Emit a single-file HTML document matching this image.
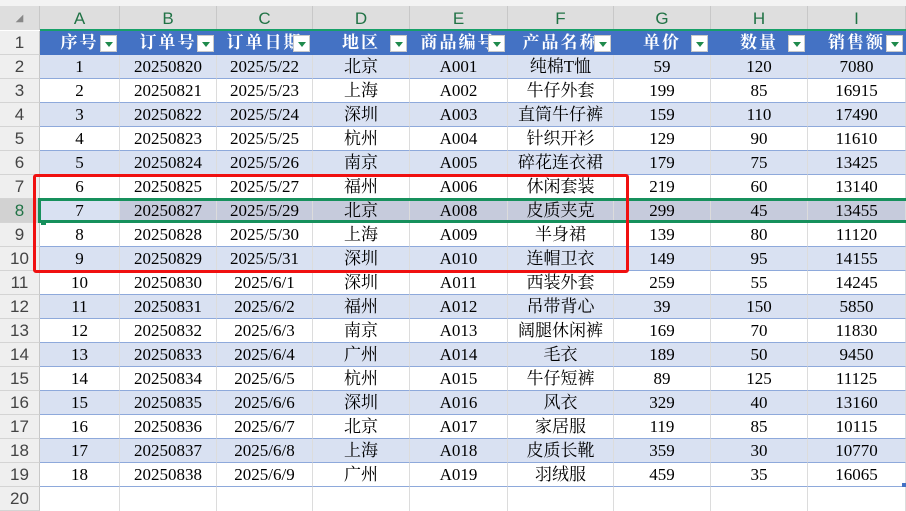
<!DOCTYPE html>
<html><head><meta charset="utf-8"><style>
body{margin:0;width:906px;height:511px;overflow:hidden;background:#fff;position:relative;font-family:"Liberation Serif","Noto Serif CJK SC",serif;}
.top{position:absolute;left:0;top:0;width:906px;height:6px;background:#f3f3f3}
.ch{position:absolute;top:6px;height:24px;background:#dedede;border-right:1px solid #c8c8c8;box-sizing:border-box;text-align:center;line-height:25px;font-family:"Liberation Sans",sans-serif;font-size:17px;color:#217346}
.gl{position:absolute;left:40px;top:29px;width:866px;height:2px;background:#17a068}
.rh{position:absolute;left:0;width:40px;height:24px;background:#efefef;border-bottom:1px solid #d4d4d4;border-right:1px solid #c8c8c8;box-sizing:border-box;text-align:center;line-height:24px;font-family:"Liberation Sans",sans-serif;font-size:17px;color:#444}
.c{position:absolute;height:24px;box-sizing:border-box;border-right:1px solid #dcdcdc;border-bottom:1px solid #8ea9db;text-align:center;line-height:24px;font-size:17px;color:#000;white-space:nowrap;overflow:hidden}
.h{background:#4472c4;color:#fff;font-weight:bold;border-right:1px solid #4472c4;border-bottom:none;letter-spacing:2px}
.fb{position:absolute;top:4px;width:17px;height:17px;background:#fff;border:1px solid #c9c9c9;box-sizing:border-box}
.fb:after{content:"";position:absolute;left:4px;top:6px;border-left:4px solid transparent;border-right:4px solid transparent;border-top:5px solid #1f8a4c}
</style></head><body>
<div class="top"></div>
<div class="ch" style="left:0;width:40px;color:#888;font-size:10px">◢</div>
<div id="g"></div>
<script>
var cols=[40,120,217,313,410,508,614,711,808,906];
var L="ABCDEFGHI";
var hdr=["序号","订单号","订单日期","地区","商品编号","产品名称","单价","数量","销售额"];
var d=[
[1,20250820,"2025/5/22","北京","A001","纯棉T恤",59,120,7080],
[2,20250821,"2025/5/23","上海","A002","牛仔外套",199,85,16915],
[3,20250822,"2025/5/24","深圳","A003","直筒牛仔裤",159,110,17490],
[4,20250823,"2025/5/25","杭州","A004","针织开衫",129,90,11610],
[5,20250824,"2025/5/26","南京","A005","碎花连衣裙",179,75,13425],
[6,20250825,"2025/5/27","福州","A006","休闲套装",219,60,13140],
[7,20250827,"2025/5/29","北京","A008","皮质夹克",299,45,13455],
[8,20250828,"2025/5/30","上海","A009","半身裙",139,80,11120],
[9,20250829,"2025/5/31","深圳","A010","连帽卫衣",149,95,14155],
[10,20250830,"2025/6/1","深圳","A011","西装外套",259,55,14245],
[11,20250831,"2025/6/2","福州","A012","吊带背心",39,150,5850],
[12,20250832,"2025/6/3","南京","A013","阔腿休闲裤",169,70,11830],
[13,20250833,"2025/6/4","广州","A014","毛衣",189,50,9450],
[14,20250834,"2025/6/5","杭州","A015","牛仔短裤",89,125,11125],
[15,20250835,"2025/6/6","深圳","A016","风衣",329,40,13160],
[16,20250836,"2025/6/7","北京","A017","家居服",119,85,10115],
[17,20250837,"2025/6/8","上海","A018","皮质长靴",359,30,10770],
[18,20250838,"2025/6/9","广州","A019","羽绒服",459,35,16065]];
var s="";
for(var i=0;i<9;i++){s+='<div class="ch" style="left:'+cols[i]+'px;width:'+(cols[i+1]-cols[i])+'px">'+L[i]+'</div>';}
s+='<div class="gl"></div>';
for(var r=1;r<=20;r++){var t=31+24*(r-1);
s+='<div class="rh" style="top:'+t+'px;'+(r==8?'background:#d2d2d2;color:#217346':'')+'">'+r+'</div>';
for(var i=0;i<9;i++){var l=cols[i],w=cols[i+1]-cols[i];
if(r==1){s+='<div class="c h" style="left:'+l+'px;top:'+t+'px;width:'+w+'px">'+hdr[i]+'<div class="fb" style="left:'+(w-20)+'px"></div></div>';}
else if(r<=19){var bg=(r%2==0)?'#d9e1f2':'#fff';if(r==8)bg=i==0?'#d9e1f2':'#c6cbdc';
s+='<div class="c" style="left:'+l+'px;top:'+t+'px;width:'+w+'px;background:'+bg+'">'+d[r-2][i]+'</div>';}
else{s+='<div class="c" style="left:'+l+'px;top:'+t+'px;width:'+w+'px;border-bottom:none"></div>';}
}}
s+='<div style="position:absolute;left:38px;top:198px;width:868px;height:25px;border:3px solid #16905c;border-right:none;box-sizing:border-box"></div>';
s+='<div style="position:absolute;left:41px;top:220px;width:5px;height:5px;background:#16905c"></div>';
s+='<div style="position:absolute;left:33px;top:174px;width:596px;height:99px;border:3px solid #f01010;border-radius:3px;box-sizing:border-box"></div>';
s+='<div style="position:absolute;left:902px;top:483px;width:4px;height:4px;background:#4472c4"></div>';
document.getElementById("g").innerHTML=s;
</script>
</body></html>
